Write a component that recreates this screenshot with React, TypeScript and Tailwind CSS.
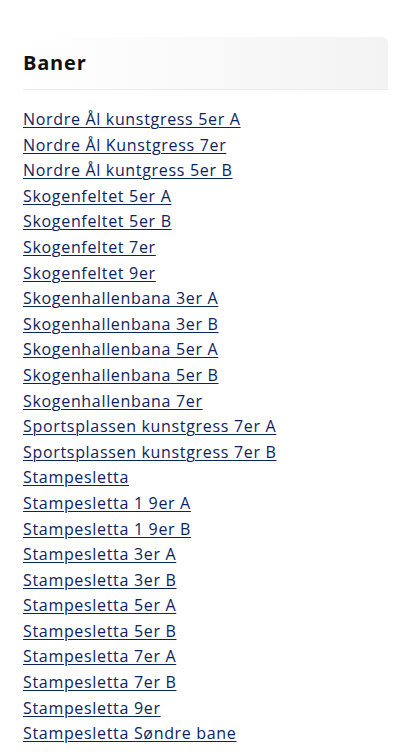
import React from "react";

const baner = [
  "Nordre Ål kunstgress 5er A",
  "Nordre Ål Kunstgress 7er",
  "Nordre Ål kuntgress 5er B",
  "Skogenfeltet 5er A",
  "Skogenfeltet 5er B",
  "Skogenfeltet 7er",
  "Skogenfeltet 9er",
  "Skogenhallenbana 3er A",
  "Skogenhallenbana 3er B",
  "Skogenhallenbana 5er A",
  "Skogenhallenbana 5er B",
  "Skogenhallenbana 7er",
  "Sportsplassen kunstgress 7er A",
  "Sportsplassen kunstgress 7er B",
  "Stampesletta",
  "Stampesletta 1 9er A",
  "Stampesletta 1 9er B",
  "Stampesletta 3er A",
  "Stampesletta 3er B",
  "Stampesletta 5er A",
  "Stampesletta 5er B",
  "Stampesletta 7er A",
  "Stampesletta 7er B",
  "Stampesletta 9er",
  "Stampesletta Søndre bane",
];

export default function App() {
  return (
    <div className="min-h-screen bg-white pl-[23px] pr-[15px] pt-[37px] font-['Open_Sans',sans-serif]">
      <div className="flex h-[53px] items-center rounded-tr-md border-b border-[#ececec] bg-gradient-to-r from-white to-[#f3f3f3]">
        <h2 className="text-[20px] font-bold tracking-[0.8px] text-[#111]">Baner</h2>
      </div>
      <ul className="mt-[17px] flex flex-col">
        {baner.map((name) => (
          <li key={name} className="text-[16px] leading-[25.6px]">
            <a
              href="#"
              className="font-medium tracking-[0.68px] text-[#0b2461] underline decoration-1 underline-offset-2"
            >
              {name}
            </a>
          </li>
        ))}
      </ul>
    </div>
  );
}
